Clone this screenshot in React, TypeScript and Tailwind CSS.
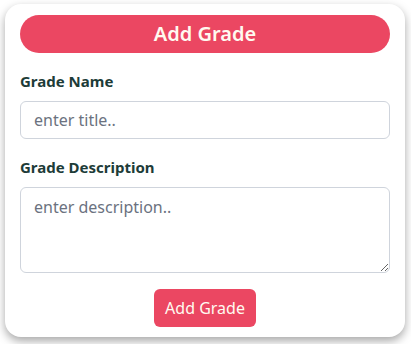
export default function App() {
  return (
    <div className="w-[411px] h-[344px] bg-white pt-1 pl-[5px] font-['Segoe_UI','Noto_Sans',sans-serif]">
      <div className="w-[400px] h-[333px] rounded-2xl bg-white shadow-[0_4px_10px_rgba(0,0,0,0.35)] px-[15px] pt-[11px]">
        <div className="h-[38px] rounded-full bg-[#eb4762] flex items-center justify-center text-[20px] font-semibold text-[#fffaf0]">
          Add Grade
        </div>
        <form className="mt-[18px]" onSubmit={(e) => e.preventDefault()}>
          <label className="block text-[15px] font-bold text-[#1d3c38] leading-5">Grade Name</label>
          <input
            type="text"
            placeholder="enter title.."
            className="mt-[10px] w-full h-[38px] rounded-md border border-[#cfd4dc] px-[13px] text-base placeholder:text-[#6b7280] outline-none"
          />
          <label className="block mt-[18px] text-[15px] font-bold text-[#1d3c38] leading-5">Grade Description</label>
          <textarea
            placeholder="enter description.."
            className="mt-[10px] block w-full h-[86px] rounded-md border border-[#cfd4dc] px-[13px] py-[7px] text-base placeholder:text-[#6b7280] outline-none"
          />
          <div className="flex justify-center mt-[16px]">
            <button className="h-[38px] px-[11px] rounded-md bg-[#eb4762] text-base text-[#fffaf0]">
              Add Grade
            </button>
          </div>
        </form>
      </div>
    </div>
  )
}
